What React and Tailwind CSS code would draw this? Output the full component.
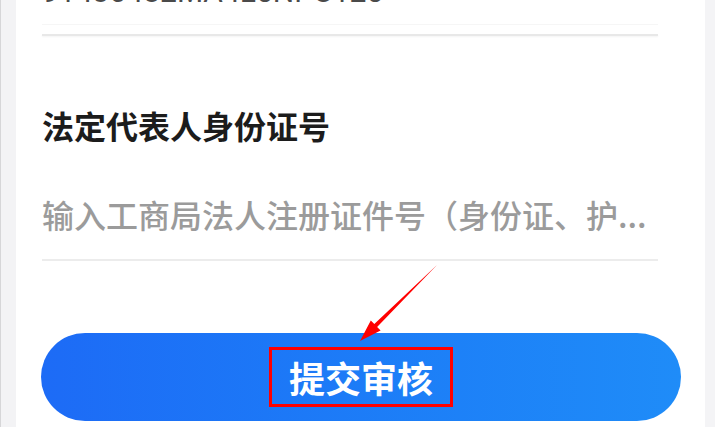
export default function App() {
  return (
    <div className="relative flex h-[427px] w-full overflow-hidden bg-[#f4f4f6] font-['Noto_Sans_CJK_SC',sans-serif]">
      {/* left edge */}
      <div className="w-[16px] shrink-0 border-l border-[#d6d6d8] bg-[#f3f3f5]"></div>

      {/* Card */}
      <div className="flex w-[689px] shrink-0 flex-col bg-white pl-[25px] pr-[24px]">
        <div className="flex flex-col pl-[1px] pr-[23px]">
          {/* previous field value, cut off at the top */}
          <div className="mt-[-23px] whitespace-nowrap font-['Roboto',sans-serif] text-[30px] leading-none text-[#4a4a4a]">
            91430482MA4L5NPC125
          </div>
          <div className="mt-[17px] h-px bg-[#f6f6f6]"></div>
          <div className="mt-[9px] h-[2px] bg-[#e8e8e8] shadow-[0_1px_2px_rgba(0,0,0,0.05)]"></div>

          {/* Label */}
          <div className="mt-[73px] text-[32px] font-semibold leading-none text-[#1c1c1c]">
            法定代表人身份证号
          </div>

          {/* Placeholder */}
          <div className="mt-[57px] whitespace-nowrap text-[32px] font-medium leading-none text-[#9b9b9b]">
            输入工商局法人注册证件号（身份证、护...
          </div>
          <div className="mt-[29px] h-[2px] bg-[#ececec]"></div>
        </div>

        {/* Submit */}
        <button className="mt-[72px] flex h-[88px] w-full items-center justify-center rounded-full bg-linear-to-r from-[#1d6bf6] to-[#1f8cf8]">
          <span className="flex h-[60px] items-center border-[3px] border-[#ff0000] px-[17px] text-[36px] font-semibold leading-none text-white">
            提交审核
          </span>
        </button>
      </div>

      {/* right edge */}
      <div className="flex-1 bg-[#f4f4f6]"></div>

      {/* annotation arrow */}
      <svg
        className="pointer-events-none absolute inset-0"
        width="715"
        height="427"
        viewBox="0 0 715 427"
      >
        <polygon
          points="437,265 377.1,326.9 380.6,330.5 360,341 370.8,320.5 374.3,324.1"
          fill="#ff0000"
        />
      </svg>
    </div>
  );
}
